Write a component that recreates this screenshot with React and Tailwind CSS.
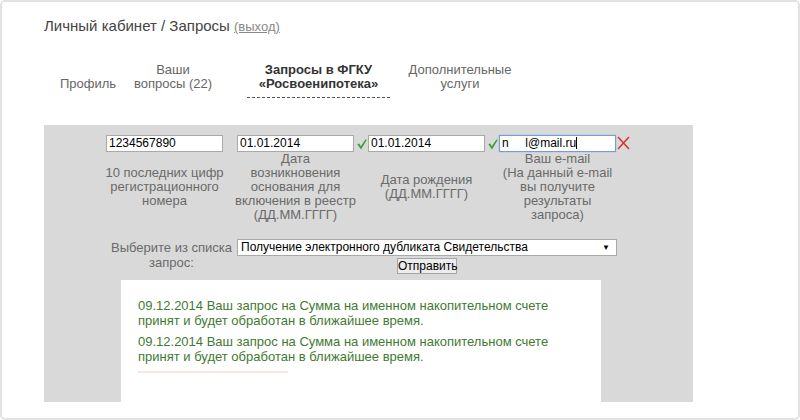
import React from "react";

const Check = () => (
  <svg width="10" height="11" viewBox="0 0 10 11" className="ml-[3px] mt-[4px]">
    <path d="M0.3 5.2 L2.2 4.6 L3.8 7.2 L8.6 0.3 L9.7 1 L4 10.5 Z" fill="#35a335" />
  </svg>
);

const Cross = () => (
  <svg width="13" height="14" viewBox="0 0 13 14" className="ml-[1px] mt-[1px]">
    <path d="M1 1 L12 13 M12 1 L1 13" stroke="#d8322f" strokeWidth="1.5" />
  </svg>
);

function Field({ value, label, check, focus, cross }) {
  return (
    <div className="w-[131px] shrink-0 flex flex-col">
      <div className="flex h-[17px]">
        <div
          className={
            focus
              ? "w-[117px] h-[17px] bg-white border border-[#6f9fd8] shadow-[0_0_1px_#7aa7e0] text-[12px] leading-[15px] pl-[2px] text-black whitespace-pre"
              : "w-[117px] h-[17px] bg-white border border-[#a9a9a9] text-[12px] leading-[15px] pl-[2px] text-black whitespace-pre"
          }
        >
          {value}
          {focus && <span className="inline-block w-px h-[12px] bg-black align-[-2px]" />}
        </div>
        {check && <Check />}
        {cross && <Cross />}
      </div>
      <div className="ml-[-8px] w-[133px] h-[70px] flex items-center justify-center text-center text-[13px] leading-[14px] text-[#6a6a6a] whitespace-nowrap">
        <div>{label}</div>
      </div>
    </div>
  );
}

export default function App() {
  return (
    <div
      className="w-[800px] h-[420px] bg-white border-2 border-[#e2e2e2] rounded-[5px] overflow-hidden pl-[42px]"
      style={{ fontFamily: '"Liberation Sans", Arial, sans-serif' }}
    >
      <div className="mt-[15px] h-[18px] leading-[18px] text-[15px] text-[#444]">
        Личный кабинет / Запросы{" "}
        <span className="text-[13px] text-[#888] underline">(выход)</span>
      </div>

      <div className="mt-[28px] flex items-start text-[13px] leading-[14px] text-[#666]">
        <div className="w-[88px] text-center pt-[14px]">Профиль</div>
        <div className="w-[82px] text-center">
          Ваши
          <br />
          вопросы (22)
        </div>
        <div className="ml-[33px] w-[143px] text-center font-bold text-[#333] pb-[6px] border-b border-dashed border-[#555]">
          Запросы в ФГКУ
          <br />
          «Росвоенипотека»
        </div>
        <div className="w-[140px] text-center">
          Дополнительные
          <br />
          услуги
        </div>
      </div>

      <div className="mt-[27px] w-[649px] h-[277px] bg-[#d9d9d9] overflow-hidden pl-[62px] pt-[10px] flex flex-col">
        <div className="flex">
          <Field
            value="1234567890"
            label={
              <>
                10 последних цифр
                <br />
                регистрационного
                <br />
                номера
              </>
            }
          />
          <Field
            value="01.01.2014"
            check
            label={
              <>
                Дата
                <br />
                возникновения
                <br />
                основания для
                <br />
                включения в реестр
                <br />
                (ДД.ММ.ГГГГ)
              </>
            }
          />
          <Field
            value="01.01.2014"
            check
            label={
              <>
                Дата рождения
                <br />
                (ДД.ММ.ГГГГ)
              </>
            }
          />
          <Field
            value={"n     l@mail.ru"}
            focus
            cross
            label={
              <>
                Ваш e-mail
                <br />
                (На данный e-mail
                <br />
                вы получите
                <br />
                результаты
                <br />
                запроса)
              </>
            }
          />
        </div>

        <div className="mt-[17px] flex">
          <div className="w-[131px] text-center text-[13px] leading-[15px] text-[#6a6a6a] pt-[1px] whitespace-nowrap">
            Выберите из списка
            <br />
            запрос:
          </div>
          <div className="w-[380px] flex flex-col">
            <div className="h-[17px] bg-white border border-[#a9a9a9] text-[12px] leading-[15px] pl-[3px] pr-[6px] text-black flex justify-between">
              <span>Получение электронного дубликата Свидетельства</span>
              <span className="text-[8px]">▼</span>
            </div>
            <div className="mt-[2px] mx-auto w-[60px] h-[16px] bg-[#ececec] border border-[#a6a6a6] text-[12px] leading-[14px] text-black text-center">
              Отправить
            </div>
          </div>
        </div>

        <div className="mt-[6px] ml-[15px] w-[480px] flex-1 bg-white pl-[17px] pt-[18px] text-[13px] leading-[15px] text-[#3f7a30]">
          <div>
            09.12.2014 Ваш запрос на Сумма на именном накопительном счете
            <br />
            принят и будет обработан в ближайшее время.
          </div>
          <div className="mt-[6px]">
            09.12.2014 Ваш запрос на Сумма на именном накопительном счете
            <br />
            принят и будет обработан в ближайшее время.
          </div>
          <div className="mt-[7px] h-[2px] w-[150px] bg-[#fbe4e4]" />
        </div>
      </div>
    </div>
  );
}
